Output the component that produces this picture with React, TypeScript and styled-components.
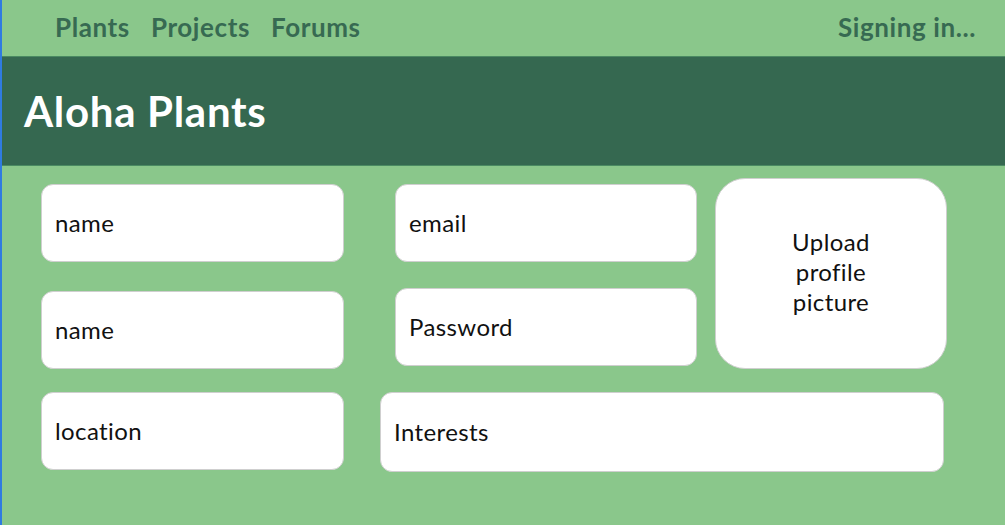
import React from "react";
import styled, { createGlobalStyle } from "styled-components";

const Global = createGlobalStyle`
  html, body { margin: 0; padding: 0; background: #8ac78b; }
  body { font-family: Lato, "Open Sans", sans-serif; }
`;

const Page = styled.div`
  width: 1005px;
  height: 525px;
  background: #8ac78b;
  border-left: 2px solid #2f7be0;
  box-sizing: border-box;
  overflow: hidden;
`;

const Nav = styled.nav`
  height: 56px;
  display: flex;
  align-items: center;
  padding: 0 29px 3px 53px;
  box-sizing: border-box;
`;

const NavLinks = styled.div`
  display: flex;
  gap: 21px;
  flex: 1;
`;

const NavLink = styled.a`
  font-size: 26px;
  font-weight: 700;
  color: #376a52;
  text-decoration: none;
  letter-spacing: 0.6px;
`;

const Header = styled.header`
  height: 110px;
  background: #356850;
  border-top: 1px solid #4a8a62;
  border-bottom: 1px solid #4a8a62;
  box-sizing: border-box;
  display: flex;
  align-items: center;
  padding-left: 22px;
`;

const Title = styled.h1`
  margin: 0;
  font-size: 42px;
  font-weight: 700;
  color: #ffffff;
  letter-spacing: 0.7px;
`;

const Form = styled.div`
  padding: 12px 0 0 39px;
  display: flex;
  flex-direction: column;
  gap: 23px;
`;

const TopRow = styled.div`
  display: flex;
  align-items: flex-start;
`;

const Column = styled.div<{ $gap: number; $ml: number }>`
  display: flex;
  flex-direction: column;
  gap: ${(p) => p.$gap}px;
  margin-top: 6px;
  margin-left: ${(p) => p.$ml}px;
`;

const BottomRow = styled.div`
  display: flex;
  gap: 36px;
`;

const Field = styled.div<{ $w: number; $h?: number }>`
  width: ${(p) => p.$w}px;
  height: ${(p) => p.$h ?? 78}px;
  background: #ffffff;
  border: 1px solid #cfcfcf;
  border-radius: 12px;
  box-sizing: border-box;
  display: flex;
  align-items: center;
  padding: 0 0 2px 13px;
  font-size: 24px;
  letter-spacing: 0.4px;
  color: #111;
`;

const Upload = styled.div`
  width: 232px;
  height: 191px;
  margin-left: 18px;
  background: #ffffff;
  border: 1px solid #cfcfcf;
  border-radius: 30px;
  box-sizing: border-box;
  display: flex;
  align-items: center;
  justify-content: center;
  text-align: center;
  font-size: 24px;
  letter-spacing: 0.4px;
  line-height: 30px;
  color: #111;
  padding-bottom: 4px;
`;

export default function App() {
  return (
    <>
      <Global />
      <Page>
        <Nav>
          <NavLinks>
            <NavLink>Plants</NavLink>
            <NavLink>Projects</NavLink>
            <NavLink>Forums</NavLink>
          </NavLinks>
          <NavLink>Signing in...</NavLink>
        </Nav>
        <Header>
          <Title>Aloha Plants</Title>
        </Header>
        <Form>
          <TopRow>
            <Column $gap={29} $ml={0}>
              <Field $w={303}>name</Field>
              <Field $w={303}>name</Field>
            </Column>
            <Column $gap={26} $ml={51}>
              <Field $w={302}>email</Field>
              <Field $w={302}>Password</Field>
            </Column>
            <Upload>
              Upload
              <br />
              profile
              <br />
              picture
            </Upload>
          </TopRow>
          <BottomRow>
            <Field $w={303}>location</Field>
            <Field $w={564} $h={80}>Interests</Field>
          </BottomRow>
        </Form>
      </Page>
    </>
  );
}
